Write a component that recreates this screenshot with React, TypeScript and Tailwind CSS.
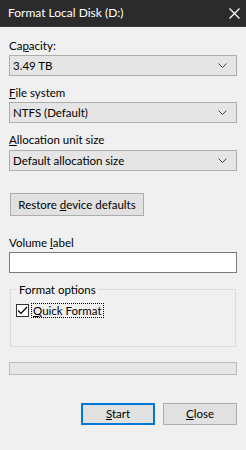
import React from 'react'

function Chevron() {
  return (
    <svg width="9" height="5" viewBox="0 0 9 5" className="shrink-0">
      <path d="M0.5 0.5 L4.5 4.5 L8.5 0.5" fill="none" stroke="#444" strokeWidth="1" />
    </svg>
  )
}

function Combo({ value }: { value: string }) {
  return (
    <div className="flex h-[21px] items-center justify-between border border-[#adadad] bg-[#e5e5e5] pl-[3px] pr-[9px]">
      <span>{value}</span>
      <Chevron />
    </div>
  )
}

function Label({ children, className = '' }: { children: React.ReactNode; className?: string }) {
  return <div className={`h-[15px] leading-[15px] ${className}`}>{children}</div>
}

export default function App() {
  return (
    <div
      className="flex h-[450px] w-[246px] flex-col bg-[#f0f0f0] text-[11.5px] text-black"
      style={{ fontFamily: '"Segoe UI", Lato, "Noto Sans", sans-serif' }}
    >
      {/* Title bar */}
      <div className="flex h-[27px] items-center justify-between border-b border-[#3a3a3a] bg-[#2b2b2b] pl-[8px] pr-[6px] text-white">
        <span className="text-[12px] leading-none">Format Local Disk (D:)</span>
        <svg width="11" height="11" viewBox="0 0 11 11">
          <path d="M0.5 0.5 L10.5 10.5 M10.5 0.5 L0.5 10.5" stroke="#fff" strokeWidth="1.2" />
        </svg>
      </div>

      <div className="flex flex-col px-[9px]">
        <Label className="mt-[11px]">
          Ca<span className="underline">p</span>acity:
        </Label>
        <div className="mt-[2px]">
          <Combo value="3.49 TB" />
        </div>

        <Label className="mt-[9px]">
          <span className="underline">F</span>ile system
        </Label>
        <div className="mt-[2px]">
          <Combo value="NTFS (Default)" />
        </div>

        <Label className="mt-[9px]">
          <span className="underline">A</span>llocation unit size
        </Label>
        <div className="mt-[3px]">
          <Combo value="Default allocation size" />
        </div>

        <div className="mt-[22px] flex">
          <button className="ml-px flex h-[23px] w-[134px] items-center justify-center border border-[#adadad] bg-[#e1e1e1]">
            <span>
              Restore <span className="underline">d</span>evice defaults
            </span>
          </button>
        </div>

        <Label className="mt-[19px]">
          Volume <span className="underline">l</span>abel
        </Label>
        <div className="mt-[2px] h-[21px] border border-[#7a7a7a] bg-white" />

        <fieldset className="mx-px mt-[9px] h-[65px] border border-[#dcdcdc] p-0">
          <legend className="ml-[6px] px-[2px] leading-[15px]">Format options</legend>
          <div className="mt-[6px] flex items-center pl-[5px]">
            <div className="flex h-[13px] w-[13px] items-center justify-center border border-[#333] bg-white">
              <svg width="11" height="9" viewBox="0 0 11 9">
                <path d="M1 4.5 L4 7.5 L10 1" fill="none" stroke="#000" strokeWidth="1.2" />
              </svg>
            </div>
            <span className="ml-[2px] border border-dotted border-black px-px leading-[13px]">
              <span className="underline">Q</span>uick Format
            </span>
          </div>
        </fieldset>

        <div className="mt-[15px] h-[13px] border border-[#bcbcbc] bg-[#e6e6e6]" />

        <div className="mt-[28px] flex justify-end gap-[8px]">
          <button className="flex h-[22px] w-[74px] items-center justify-center border-2 border-[#0078d7] bg-[#e1e1e1]">
            <span>
              <span className="underline">S</span>tart
            </span>
          </button>
          <button className="flex h-[22px] w-[74px] items-center justify-center border border-[#adadad] bg-[#e1e1e1]">
            <span>
              <span className="underline">C</span>lose
            </span>
          </button>
        </div>
      </div>
    </div>
  )
}
